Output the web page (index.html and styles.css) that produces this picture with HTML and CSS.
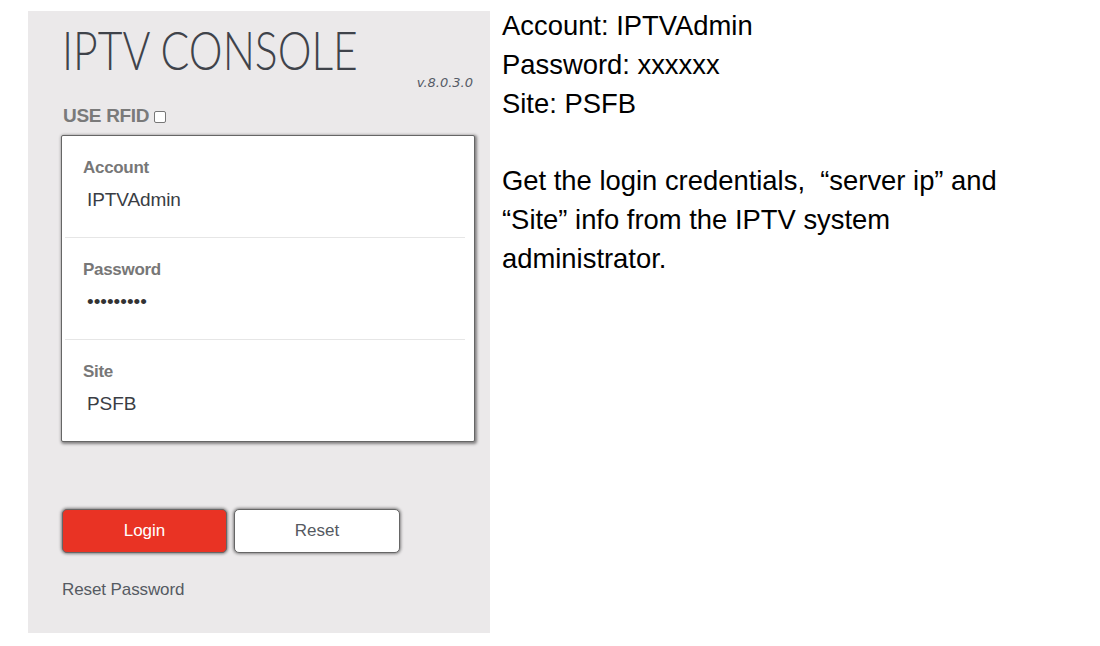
FILE: index.html
```html
<!DOCTYPE html>
<html>
<head>
<meta charset="utf-8">
<link rel="stylesheet" href="styles.css">
</head>
<body>
<div class="page">
  <div class="panel">
    <h1 class="title"><span class="title-text">IPTV CONSOLE</span></h1>
    <div class="version">v.8.0.3.0</div>
    <div class="rfid">USE RFID <span class="checkbox"></span></div>
    <div class="card">
      <div class="field">
        <div class="label">Account</div>
        <div class="value">IPTVAdmin</div>
      </div>
      <div class="field">
        <div class="label">Password</div>
        <div class="value dots">•••••••••</div>
      </div>
      <div class="field last">
        <div class="label">Site</div>
        <div class="value">PSFB</div>
      </div>
    </div>
    <div class="buttons">
      <div class="btn btn-login">Login</div>
      <div class="btn btn-reset">Reset</div>
    </div>
    <div class="reset-link">Reset Password</div>
  </div>
  <div class="notes">
    <p>Account: IPTVAdmin<br>Password: xxxxxx<br>Site: PSFB</p>
    <p>Get the login credentials,&nbsp; “server ip” and “Site” info from the IPTV system administrator.</p>
  </div>
</div>
</body>
</html>
```
FILE: styles.css
```css
html, body {
  margin: 0;
  padding: 0;
  background: #ffffff;
}
.page {
  display: flex;
  align-items: flex-start;
  padding: 7px 0 0 28px;
  font-family: "Liberation Sans", Arial, sans-serif;
}
.panel {
  margin-top: 4px;
  width: 462px;
  height: 622px;
  box-sizing: border-box;
  background: #ebe9ea;
  padding: 14px 15px 0 33px;
  display: flex;
  flex-direction: column;
}
.title {
  margin: 0;
  padding-left: 1px;
  font-family: Lato, "Liberation Sans", sans-serif;
  font-weight: 300;
  font-size: 54px;
  line-height: 50px;
  color: #3f434a;
  white-space: nowrap;
}
.title-text {
  display: inline-block;
  transform: scaleX(0.79);
  transform-origin: left center;
}
.version {
  align-self: flex-end;
  margin-right: 2px;
  font-family: "DejaVu Sans", sans-serif;
  font-style: italic;
  font-size: 13px;
  line-height: 16px;
  color: #555b66;
}
.rfid {
  margin-top: 14px;
  display: flex;
  align-items: center;
  gap: 5px;
  font-weight: bold;
  font-size: 19px;
  line-height: 22px;
  color: #7a7a7a;
  letter-spacing: -0.3px;
  padding-left: 2px;
}
.checkbox {
  width: 10px;
  height: 10px;
  border: 1px solid #777;
  border-radius: 2px;
  background: #fff;
  margin-top: 1px;
}
.card {
  margin-top: 8px;
  background: #fff;
  border: 1px solid #666;
  box-shadow: 1px 1px 3px 1px rgba(0, 0, 0, 0.45);
  border-radius: 2px;
  height: 307px;
  box-sizing: border-box;
  display: flex;
  flex-direction: column;
}
.field {
  margin: 0 9px 0 3px;
  padding: 22px 0 25px 18px;
  border-bottom: 1px solid #e6e6e6;
}
.field.last {
  border-bottom: none;
  padding-bottom: 0;
}
.label {
  font-weight: bold;
  font-size: 17px;
  line-height: 20px;
  color: #777777;
  letter-spacing: -0.3px;
}
.value {
  margin-top: 10px;
  padding-left: 4px;
  font-size: 19px;
  line-height: 24px;
  color: #3a3d44;
  letter-spacing: -0.1px;
}
.value.dots {
  letter-spacing: 0;
  color: #333;
}
.buttons {
  margin-top: 67px;
  display: flex;
  gap: 7px;
  padding-left: 1px;
}
.btn {
  width: 165px;
  height: 44px;
  box-sizing: border-box;
  border-radius: 5px;
  border: 1px solid #666;
  box-shadow: 0 0 3px 1px rgba(0, 0, 0, 0.45);
  display: flex;
  align-items: center;
  justify-content: center;
  font-size: 17px;
}
.btn-login {
  background: #e93324;
  color: #ffffff;
}
.btn-reset {
  width: 166px;
  background: #ffffff;
  color: #555961;
}
.reset-link {
  margin-top: 27px;
  padding-left: 1px;
  font-size: 17px;
  line-height: 20px;
  color: #555a62;
  letter-spacing: -0.1px;
}
.notes {
  margin-left: 12px;
  width: 540px;
  font-size: 27.4px;
  line-height: 38.75px;
  color: #000;
}
.notes p {
  margin: 0 0 38.75px 0;
}
```
